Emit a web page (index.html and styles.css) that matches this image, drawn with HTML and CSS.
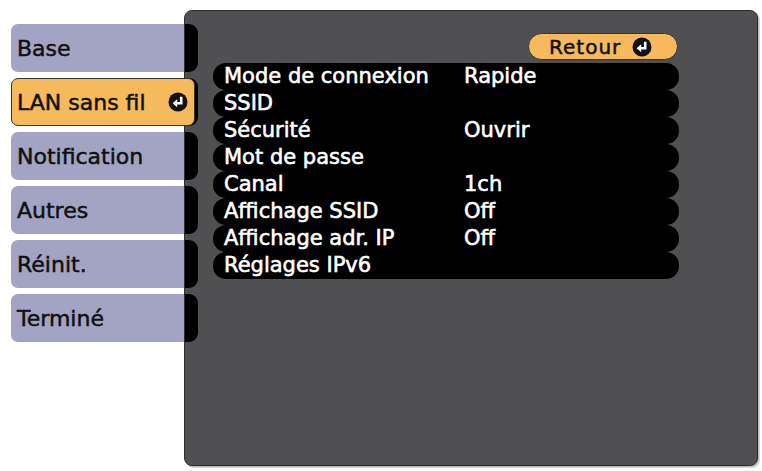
FILE: index.html
```html
<!DOCTYPE html>
<html lang="fr">
<head>
<meta charset="utf-8">
<title>LAN sans fil</title>
<link rel="stylesheet" href="styles.css">
</head>
<body>
<div class="screen">
  <nav class="tabs">
    <div class="tab">Base</div>
    <div class="tab active">LAN sans fil
      <svg class="enter" viewBox="0 0 20 20"><circle cx="10" cy="10" r="9.5" fill="#111"/><path d="M13.2 4.8V11.2H8.2" fill="none" stroke="#fff" stroke-width="2.6"/><path d="M9.2 7.2L4.6 11.2L9.2 15.2Z" fill="#fff"/></svg>
    </div>
    <div class="tab">Notification</div>
    <div class="tab">Autres</div>
    <div class="tab">Réinit.</div>
    <div class="tab">Terminé</div>
  </nav>
  <section class="panel">
    <div class="bumps">
      <span class="bump"></span><span class="bump"></span><span class="bump"></span>
      <span class="bump"></span><span class="bump"></span><span class="bump"></span>
    </div>
    <div class="main">
      <div class="back">Retour
        <svg class="enter" viewBox="0 0 20 20"><circle cx="10" cy="10" r="9.5" fill="#111"/><path d="M13.2 4.8V11.2H8.2" fill="none" stroke="#fff" stroke-width="2.6"/><path d="M9.2 7.2L4.6 11.2L9.2 15.2Z" fill="#fff"/></svg>
      </div>
      <ul class="rows">
        <li class="row"><span class="label">Mode de connexion</span><span class="value">Rapide</span></li>
        <li class="row"><span class="label">SSID</span><span class="value"></span></li>
        <li class="row"><span class="label">Sécurité</span><span class="value">Ouvrir</span></li>
        <li class="row"><span class="label">Mot de passe</span><span class="value"></span></li>
        <li class="row"><span class="label">Canal</span><span class="value">1ch</span></li>
        <li class="row"><span class="label">Affichage SSID</span><span class="value">Off</span></li>
        <li class="row"><span class="label">Affichage adr. IP</span><span class="value">Off</span></li>
        <li class="row"><span class="label">Réglages IPv6</span><span class="value"></span></li>
      </ul>
    </div>
  </section>
</div>
</body>
</html>
```
FILE: styles.css
```css
html, body {
  margin: 0;
  padding: 0;
  background: #fff;
}
body {
  font-family: "DejaVu Sans", "Liberation Sans", sans-serif;
  font-size: 22px;
}
.screen {
  display: flex;
  padding: 10px 0 0 11px;
  width: 762px;
  height: 471px;
  box-sizing: border-box;
}
.tabs {
  width: 173px;
  flex: none;
  display: flex;
  flex-direction: column;
  gap: 6px;
  padding-top: 14px;
}
.tab {
  height: 48px;
  box-sizing: border-box;
  display: flex;
  align-items: center;
  padding-left: 6px;
  background: #a3a3c3;
  color: #111;
  border-radius: 7px 0 0 7px;
  -webkit-text-stroke: 0.5px #111;
  white-space: nowrap;
}
.tab.active {
  position: relative;
  z-index: 2;
  margin-right: -11px;
  background: #f6b95c;
  border: 1px solid #3a3530;
  border-radius: 7px;
  padding-left: 5px;
  justify-content: space-between;
  padding-right: 6px;
}
.enter {
  width: 20px;
  height: 20px;
  flex: none;
}
.panel {
  width: 574px;
  height: 456px;
  flex: none;
  box-sizing: border-box;
  background: #505052;
  border: 1px solid #2e2e2e;
  border-radius: 8px;
  box-shadow: 1px 1px 0 #b8b8b8, 2px 2px 0 #d8d8d8;
  display: flex;
  overflow: hidden;
}
.bumps {
  width: 13px;
  flex: none;
  display: flex;
  flex-direction: column;
  gap: 6px;
  padding-top: 13px;
}
.bump {
  height: 48px;
  background: #000;
  border-radius: 0 9px 9px 0;
}
.main {
  flex: 1;
  padding-left: 15px;
  padding-top: 22px;
}
.back {
  margin-left: 315px;
  width: 150px;
  height: 27px;
  box-sizing: border-box;
  background: #f6b95c;
  border: 1px solid #3a3530;
  border-radius: 14px;
  display: flex;
  align-items: center;
  gap: 11px;
  padding-left: 20px;
  font-size: 20px;
  letter-spacing: 1px;
  color: #111;
  -webkit-text-stroke: 0.5px #111;
}
.rows {
  list-style: none;
  margin: 3px 0 0;
  padding: 0;
  width: 466px;
}
.row {
  display: flex;
  height: 27px;
  line-height: 26px;
  padding-left: 11px;
  background: #000;
  border-radius: 13px;
  color: #fff;
  font-size: 21px;
  -webkit-text-stroke: 0.6px #fff;
  white-space: nowrap;
}
.label {
  width: 240px;
  flex: none;
}
```
